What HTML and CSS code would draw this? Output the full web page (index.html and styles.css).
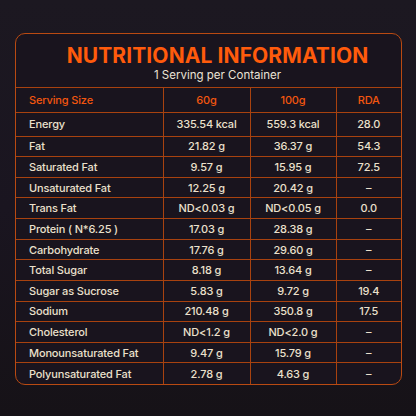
FILE: index.html
```html
<!DOCTYPE html>
<html>
<head>
<meta charset="utf-8">
<link rel="stylesheet" href="styles.css">
</head>
<body>
<div class="card">
  <div class="head">
    <h1 class="title">NUTRITIONAL INFORMATION</h1>
    <p class="sub">1 Serving per Container</p>
  </div>
  <table class="facts">
    <colgroup><col class="c1"><col class="c2"><col class="c3"><col class="c4"></colgroup>
    <thead>
      <tr class="hrow"><th class="name">Serving Size</th><th>60g</th><th>100g</th><th>RDA</th></tr>
    </thead>
    <tbody>
      <tr class="first"><td class="name">Energy</td><td>335.54 kcal</td><td>559.3 kcal</td><td>28.0</td></tr>
      <tr><td class="name">Fat</td><td>21.82 g</td><td>36.37 g</td><td>54.3</td></tr>
      <tr><td class="name">Saturated Fat</td><td>9.57 g</td><td>15.95 g</td><td>72.5</td></tr>
      <tr><td class="name">Unsaturated Fat</td><td>12.25 g</td><td>20.42 g</td><td>–</td></tr>
      <tr><td class="name">Trans Fat</td><td>ND&lt;0.03 g</td><td>ND&lt;0.05 g</td><td>0.0</td></tr>
      <tr><td class="name">Protein ( N*6.25 )</td><td>17.03 g</td><td>28.38 g</td><td>–</td></tr>
      <tr><td class="name">Carbohydrate</td><td>17.76 g</td><td>29.60 g</td><td>–</td></tr>
      <tr><td class="name">Total Sugar</td><td>8.18 g</td><td>13.64 g</td><td>–</td></tr>
      <tr><td class="name">Sugar as Sucrose</td><td>5.83 g</td><td>9.72 g</td><td>19.4</td></tr>
      <tr><td class="name">Sodium</td><td>210.48 g</td><td>350.8 g</td><td>17.5</td></tr>
      <tr><td class="name">Cholesterol</td><td>ND&lt;1.2 g</td><td>ND&lt;2.0 g</td><td>–</td></tr>
      <tr><td class="name">Monounsaturated Fat</td><td>9.47 g</td><td>15.79 g</td><td>–</td></tr>
      <tr><td class="name">Polyunsaturated Fat</td><td>2.78 g</td><td>4.63 g</td><td>–</td></tr>
    </tbody>
  </table>
</div>
</body>
</html>
```
FILE: styles.css
```css
html, body {
  margin: 0;
  padding: 0;
}
body {
  width: 416px;
  height: 416px;
  background: linear-gradient(180deg, #1c1821 0%, #1a1520 50%, #161217 100%);
  font-family: Inter, "Noto Sans", sans-serif;
  color: #ebe0cc;
  padding: 33px 14px 0 15px;
  box-sizing: border-box;
}
.card {
  border: 1px solid #b94a12;
  border-radius: 10px;
  overflow: hidden;
  background: #19141e;
}
.head {
  height: 53px;
  display: flex;
  flex-direction: column;
  align-items: center;
  padding-left: 18px;
}
.title {
  margin: 10px 0 0;
  font-size: 21px;
  line-height: 24px;
  font-weight: 700;
  color: #ff5b0c;
  letter-spacing: 0.1px;
}
.sub {
  margin: 0;
  font-size: 11.5px;
  line-height: 14px;
  font-weight: 400;
  color: #ebe3d6;
}
.facts {
  width: 100%;
  border-collapse: collapse;
  table-layout: fixed;
  font-size: 11px;
  font-weight: 500;
  letter-spacing: -0.15px;
}
.c1 { width: 147px; }
.c2 { width: 87px; }
.c3 { width: 86px; }
.c4 { width: auto; }
.facts th, .facts td {
  border-top: 1px solid #a8420f;
  border-left: 1px solid #a8420f;
  text-align: center;
  padding: 0;
  height: 20.64px;
  box-sizing: border-box;
}
.facts th:first-child, .facts td:first-child {
  border-left: none;
}
.facts .name {
  text-align: left;
  padding-left: 13px;
}
.hrow th {
  color: #f3560f;
  font-weight: 500;
  height: 25px;
}
.first td {
  height: 23.6px;
}
```
